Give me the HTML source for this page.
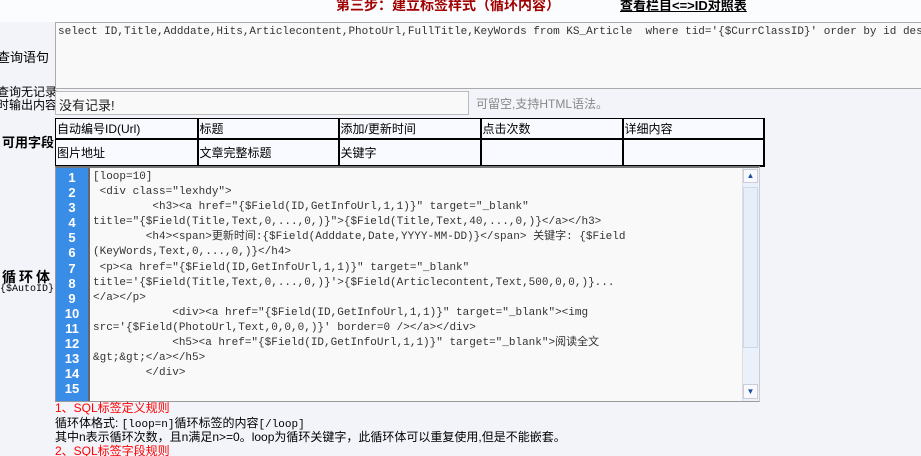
<!DOCTYPE html>
<html><head><meta charset="utf-8"><style>
*{margin:0;padding:0;box-sizing:border-box}
html,body{width:921px;height:456px;overflow:hidden;background:#f2f4f9}
body{font-family:"Liberation Sans","Noto Sans CJK SC",sans-serif;font-size:12px;color:#000;position:relative}
.a{position:absolute;white-space:nowrap}
.pre{white-space:pre}
.mono{font-family:"Liberation Mono","Noto Sans CJK SC",monospace;font-size:11px;letter-spacing:0}
.top{left:0;top:0;width:921px;height:22px;background:#fbfcfe}
td{border:1px solid #000;border-width:1px 2px 2px 1px;background:#f8faff;font-size:12px;padding:0 1px;vertical-align:middle}
table{border-collapse:collapse}
.code div{height:15.1px;line-height:15px;white-space:pre}
.gut div{height:15.1px;line-height:15px;text-align:center;color:#fff;font-weight:bold;font-size:13px;font-family:"Liberation Sans",sans-serif}
</style></head><body>
<div class="a top"></div>
<div class="a" style="left:336px;top:-5px;color:#a00000;font-weight:bold;font-size:14px">第三步：建立标签样式（循环内容）</div>
<div class="a" style="left:620px;top:-5px;font-weight:bold;font-size:13px;text-decoration:underline">查看栏目&lt;=&gt;ID对照表</div>
<div class="a" style="left:-3px;top:47px;font-size:13px">查询语句</div>
<div class="a" style="left:55px;top:22px;width:870px;height:67px;background:#f9f9fa;border:1px solid #aaa;border-right:none"></div>
<div class="a mono pre" style="left:58px;top:26px;color:#333">select ID,Title,Adddate,Hits,Articlecontent,PhotoUrl,FullTitle,KeyWords from KS_Article  where tid='{$CurrClassID}' order by id desc</div>
<div class="a" style="left:-3px;top:86px;font-size:12px;line-height:13px">查询无记录<br>时输出内容</div>
<div class="a" style="left:55px;top:91px;width:414px;height:24px;background:#f9f9fa;border:1px solid #bbb"></div>
<div class="a" style="left:59px;top:95px;font-size:13px;color:#222">没有记录!</div>
<div class="a" style="left:476px;top:95px;color:#888;font-size:12px">可留空,支持HTML语法。</div>
<div class="a" style="left:2px;top:132px;font-weight:bold;font-size:13px">可用字段</div>
<table class="a" style="left:55px;top:118px;width:710px">
<tr style="height:20px"><td style="width:142px">自动编号ID(Url)</td><td style="width:141px">标题</td><td style="width:142px">添加/更新时间</td><td style="width:142px">点击次数</td><td>详细内容</td></tr>
<tr style="height:27px"><td>图片地址</td><td>文章完整标题</td><td>关键字</td><td></td><td></td></tr>
</table>
<div class="a" style="left:2px;top:267px;font-weight:bold;font-size:14px;letter-spacing:3px">循环体</div>
<div class="a mono" style="left:0;top:284px;font-size:10px">{$AutoID}</div>
<div class="a" style="left:55px;top:166px;width:705px;height:236px;background:#f9f9fa;border:1px solid #999;border-top:2px solid #777;border-right:1px solid #ccc"></div>
<div class="a gut" style="left:56px;top:168px;width:34px;height:233px;background:#3a8de6;border-right:2px solid #666;padding-top:2px"><div>1</div><div>2</div><div>3</div><div>4</div><div>5</div><div>6</div><div>7</div><div>8</div><div>9</div><div>10</div><div>11</div><div>12</div><div>13</div><div>14</div><div>15</div></div>
<div class="a" style="left:742px;top:168px;width:17px;height:233px;background:#eaf1fb;border-left:1px solid #ddd"></div>
<div class="a" style="left:743px;top:169px;width:15px;height:14px;background:#f7f9fc;border:1px solid #ccd;color:#1a4fa0;font-size:8px;text-align:center;line-height:12px">▲</div>
<div class="a" style="left:743px;top:187px;width:15px;height:161px;background:#e6eefa;border:1px solid #cdd8e8"></div>
<div class="a" style="left:743px;top:384px;width:15px;height:15px;background:#f7f9fc;border:1px solid #ccd;color:#1a4fa0;font-size:8px;text-align:center;line-height:13px">▼</div>
<div class="a mono code" style="left:93px;top:170px;color:#333"><div>[loop=10]</div><div> &lt;div class="lexhdy"&gt;</div><div>         &lt;h3&gt;&lt;a href="{$Field(ID,GetInfoUrl,1,1)}" target="_blank"</div><div>title="{$Field(Title,Text,0,...,0,)}"&gt;{$Field(Title,Text,40,...,0,)}&lt;/a&gt;&lt;/h3&gt;</div><div>        &lt;h4&gt;&lt;span&gt;更新时间:{$Field(Adddate,Date,YYYY-MM-DD)}&lt;/span&gt; 关键字: {$Field</div><div>(KeyWords,Text,0,...,0,)}&lt;/h4&gt;</div><div> &lt;p&gt;&lt;a href="{$Field(ID,GetInfoUrl,1,1)}" target="_blank"</div><div>title='{$Field(Title,Text,0,...,0,)}'&gt;{$Field(Articlecontent,Text,500,0,0,)}...</div><div>&lt;/a&gt;&lt;/p&gt;</div><div>            &lt;div&gt;&lt;a href="{$Field(ID,GetInfoUrl,1,1)}" target="_blank"&gt;&lt;img</div><div>src='{$Field(PhotoUrl,Text,0,0,0,)}' border=0 /&gt;&lt;/a&gt;&lt;/div&gt;</div><div>            &lt;h5&gt;&lt;a href="{$Field(ID,GetInfoUrl,1,1)}" target="_blank"&gt;阅读全文</div><div>&amp;gt;&amp;gt;&lt;/a&gt;&lt;/h5&gt;</div><div>        &lt;/div&gt;</div><div></div></div>
<div class="a" style="left:55px;top:399px;color:#f00;font-size:12px">1、SQL标签定义规则</div>
<div class="a" style="left:55px;top:414px;font-size:12px">循环体格式: <span class="mono">[loop=n]</span>循环标签的内容<span class="mono">[/loop]</span></div>
<div class="a" style="left:55px;top:428px;font-size:12px">其中n表示循环次数，且n满足n&gt;=0。loop为循环关键字，此循环体可以重复使用,但是不能嵌套。</div>
<div class="a" style="left:55px;top:442px;color:#f00;font-size:12px">2、SQL标签字段规则</div>
</body></html>
